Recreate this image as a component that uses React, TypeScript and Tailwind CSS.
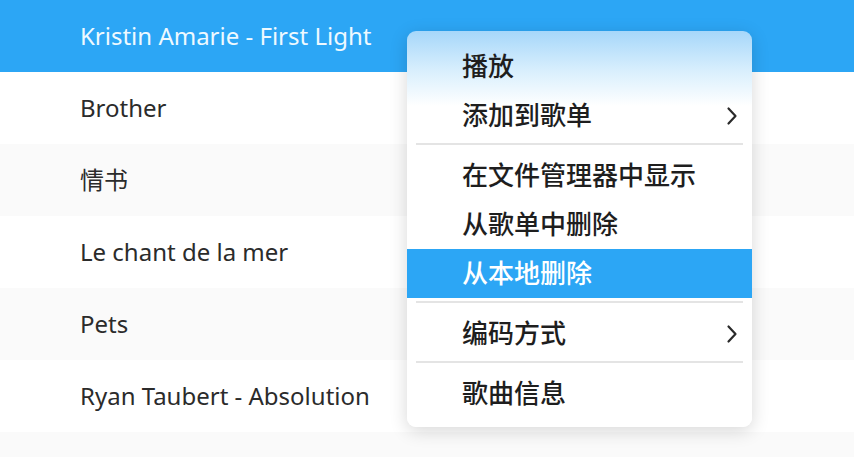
import { Fragment } from "react";

const songs = [
  "Kristin Amarie - First Light",
  "Brother",
  "情书",
  "Le chant de la mer",
  "Pets",
  "Ryan Taubert - Absolution",
  "",
];

type Item = { label?: string; sub?: boolean; active?: boolean; sep?: boolean };

const menu: Item[] = [
  { label: "播放" },
  { label: "添加到歌单", sub: true },
  { sep: true },
  { label: "在文件管理器中显示" },
  { label: "从歌单中删除" },
  { label: "从本地删除", active: true },
  { sep: true },
  { label: "编码方式", sub: true },
  { sep: true },
  { label: "歌曲信息" },
];

function Chevron() {
  return (
    <svg width="12" height="20" viewBox="0 0 12 20" fill="none">
      <path d="M2.5 2.5 L9.5 10 L2.5 17.5" stroke="#2a2a2a" strokeWidth="2.2" strokeLinecap="round" strokeLinejoin="round" />
    </svg>
  );
}

export default function App() {
  return (
    <div
      className="relative w-[854px] h-[457px] overflow-hidden bg-white"
      style={{ fontFamily: '"Noto Sans", "Noto Sans CJK SC", sans-serif' }}
    >
      {/* Song list */}
      <div className="flex flex-col">
        {songs.map((s, i) => (
          <div
            key={i}
            className={
              i === 0
                ? "h-[72px] shrink-0 flex items-center pl-[80px] bg-[#2ca6f5] text-[#eef9ff] text-[24px]"
                : i % 2 === 1
                ? "h-[72px] shrink-0 flex items-center pl-[80px] bg-white text-[#2b2b2b] text-[24px]"
                : "h-[72px] shrink-0 flex items-center pl-[80px] bg-[#fafafa] text-[#2b2b2b] text-[24px]"
            }
          >
            {s}
          </div>
        ))}
      </div>

      {/* Context menu */}
      <div className="absolute left-[407px] top-[31px] w-[345px] rounded-[9px] overflow-hidden bg-[linear-gradient(to_bottom,#a6d7fa_0px,#d9effd_40px,#ffffff_75px)] shadow-[0_4px_18px_rgba(0,0,0,0.16)] pt-[11px] pb-[9px]">
        {menu.map((m, i) => (
          <Fragment key={i}>
            {m.sep ? (
              <div className="pt-[3px] pb-[6px] px-[9px]">
                <div className="h-[2px] bg-[#e4e4e4]" />
              </div>
            ) : (
              <div
                className={
                  m.active
                    ? "h-[49px] flex items-center justify-between pl-[55px] pr-[14px] bg-[#2ca6f5] text-white text-[26px] font-medium"
                    : "h-[49px] flex items-center justify-between pl-[55px] pr-[14px] text-[#1e1e1e] text-[26px] font-medium"
                }
              >
                <span>{m.label}</span>
                {m.sub && <Chevron />}
              </div>
            )}
          </Fragment>
        ))}
      </div>
    </div>
  );
}
